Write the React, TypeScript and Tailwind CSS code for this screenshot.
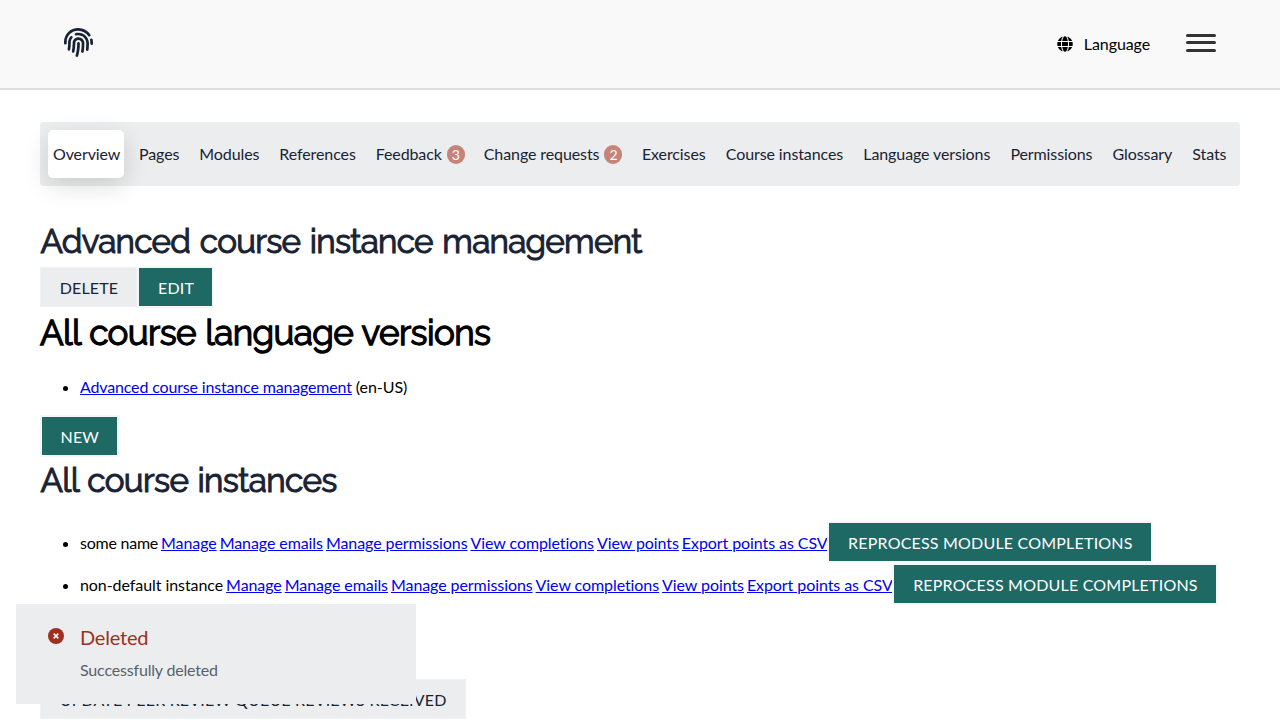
import type { ReactNode } from "react";
import { FaFingerprint, FaGlobe } from "react-icons/fa";

type Tab = { label: string; count?: number };

const tabs: Tab[] = [
  { label: "Overview" },
  { label: "Pages" },
  { label: "Modules" },
  { label: "References" },
  { label: "Feedback", count: 3 },
  { label: "Change requests", count: 2 },
  { label: "Exercises" },
  { label: "Course instances" },
  { label: "Language versions" },
  { label: "Permissions" },
  { label: "Glossary" },
  { label: "Stats" },
];

const instances = [
  { name: "some name", tracking: "tracking-[-0.24px]" },
  { name: "non-default instance", tracking: "tracking-[-0.07px]" },
];
const actions = [
  "Manage",
  "Manage emails",
  "Manage permissions",
  "View completions",
  "View points",
  "Export points as CSV",
];

function PrimaryButton({ children }: { children: ReactNode }) {
  return (
    <button className="inline-flex h-[42px] shrink-0 items-center whitespace-nowrap border-2 border-[#f5f6f7] bg-[#1f6964] pt-px pr-[18px] pl-[18.5px] tracking-[0.2px] text-white uppercase">
      {children}
    </button>
  );
}

function SecondaryButton({ children }: { children: ReactNode }) {
  return (
    <button className="inline-flex h-10 shrink-0 items-center whitespace-nowrap border border-[#f0f1f2] bg-[#ebedee] pt-px pr-[18.2px] pl-[18.7px] tracking-[0.17px] text-[#1a2333] uppercase">
      {children}
    </button>
  );
}

function Link({ children }: { children: ReactNode }) {
  return (
    <a href="#" className="text-[#0000ee] underline">
      {children}
    </a>
  );
}

export default function App() {
  return (
    <div className="relative h-[720px] overflow-hidden bg-white font-[Lato,sans-serif] text-base tracking-[-0.1px] text-black">
      <header className="flex h-[90px] items-start justify-between border-b-2 border-[#dedede] bg-[#f9f9f9] pr-16 pl-16">
        <FaFingerprint className="mt-7 size-[29px] text-[#1a2333]" />
        <div className="flex">
          <div className="mt-8 flex h-6 items-center">
            <FaGlobe className="mr-[11px] size-4" />
            <span>Language</span>
          </div>
          <div className="mt-[34px] ml-9 flex w-[30px] flex-col">
            <span className="h-[3px] rounded-full bg-[#333]" />
            <span className="mt-1 h-[3px] rounded-full bg-[#333]" />
            <span className="mt-[5px] h-[3px] rounded-full bg-[#333]" />
          </div>
        </div>
      </header>

      <main className="px-10 pt-8">
        <nav className="flex h-16 items-center justify-between rounded-[4px] bg-[#ebedee] p-2 text-[#1a2333]">
          {tabs.map((tab, i) => (
            <a
              key={tab.label}
              className={
                i === 0
                  ? "flex h-12 w-[76px] items-center rounded-[5px] bg-white px-[5px] whitespace-nowrap shadow-[0_8px_24px_rgba(0,0,0,0.14)]"
                  : i < 5
                    ? "-ml-px flex h-12 items-center pr-[5px] pl-[5.4px] whitespace-nowrap"
                    : "-ml-[0.2px] flex h-12 items-center pr-[5.5px] pl-[4.3px] whitespace-nowrap"
              }
            >
              {tab.label}
              {tab.count !== undefined && (
                <span className="-mr-[0.7px] ml-[5px] flex h-[19px] w-[18px] items-center justify-center rounded-full bg-[#c6837a] pt-px text-sm leading-none text-white">
                  {tab.count}
                </span>
              )}
            </a>
          ))}
        </nav>

        <h1 className="mt-8 h-12 pl-[0.5px] font-[Raleway,Lato,sans-serif] text-[33.2px] leading-[48px] font-normal tracking-[-0.71px] text-[#1a2333] [word-spacing:1.8px] [-webkit-text-stroke:1.1px_#1a2333]">
          Advanced course instance management
        </h1>
        <div className="flex h-[42px] items-center">
          <SecondaryButton>Delete</SecondaryButton>
          <PrimaryButton>Edit</PrimaryButton>
        </div>
        <h2 className="h-[67px] font-[Raleway,Lato,sans-serif] text-[35px] leading-[50px] font-normal tracking-[-0.6px] [word-spacing:1px] [-webkit-text-stroke:1.3px_#000]">
          All course language versions
        </h2>
        <ul className="list-disc pl-10">
          <li className="leading-6 tracking-[-0.16px]">
            <Link>Advanced course instance management</Link>{" "}
            <span className="tracking-[-0.05px]">(en-US)</span>
          </li>
        </ul>
        <div className="mt-4 flex">
          <PrimaryButton>New</PrimaryButton>
        </div>
        <h2 className="h-16 pl-[0.5px] font-[Raleway,Lato,sans-serif] text-[33.2px] leading-[47px] font-normal tracking-[-0.6px] text-[#1a2333] [word-spacing:1.2px] [-webkit-text-stroke:1.1px_#1a2333]">
          All course instances
        </h2>
        <ul className="list-disc pl-10">
          {instances.map(({ name, tracking }) => (
            <li key={name} className="h-[42px] leading-[44px]">
              <div className="flex h-[42px] gap-[3px] tracking-[-0.08px] whitespace-nowrap">
                <span className={tracking}>{name}</span>
                {actions.map((action) => (
                  <Link key={action}>{action}</Link>
                ))}
                <span className="-ml-[3.5px] flex">
                  <PrimaryButton>
                    <span className="px-[0.5px]">Reprocess module completions</span>
                  </PrimaryButton>
                </span>
              </div>
            </li>
          ))}
        </ul>
        <div className="mt-[74px] flex">
          <SecondaryButton>
            <span className="pr-[0.7px]">Update peer review queue reviews received</span>
          </SecondaryButton>
        </div>
      </main>

      <div className="absolute top-[604px] left-4 flex h-[100px] w-[400px] bg-[#ebedee] pt-5 pl-8">
        <svg viewBox="0 0 16 16" className="mt-1 size-4 shrink-0">
          <circle cx="8" cy="8" r="8" fill="#9f3020" />
          <path d="M5.7 5.7l4.6 4.6M10.3 5.7l-4.6 4.6" stroke="#ebedee" strokeWidth="1.8" />
        </svg>
        <div className="ml-4">
          <div className="text-xl leading-[26px] tracking-[-0.2px] text-[#9f3020]">Deleted</div>
          <div className="mt-2 leading-6 tracking-[-0.18px] text-[#5a616c]">Successfully deleted</div>
        </div>
      </div>
    </div>
  );
}
